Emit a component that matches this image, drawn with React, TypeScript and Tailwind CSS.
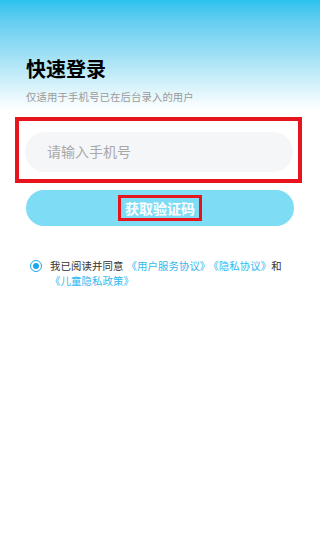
export default function App() {
  return (
    <div
      className="relative h-[553px] w-[320px] overflow-hidden bg-white"
      style={{ fontFamily: '"Noto Sans CJK SC", "Noto Sans", sans-serif' }}
    >
      {/* 顶部渐变 */}
      <div className="bg-gradient-to-b from-[#27c2ee] via-[#9fe0f5] to-white px-[26px] pb-[6px] pt-[57px]">
        <h1 className="text-[20px] font-bold leading-[24px] text-black">快速登录</h1>
        <p className="mt-[9px] text-[10.4px] leading-[14px] tracking-[0.1px] text-[#9a9a9a]">
          仅适用于手机号已在后台录入的用户
        </p>
      </div>

      <div className="ml-[15px] mt-[7px] h-[66px] w-[287px] border-4 border-[#e8141d] pl-[6px] pr-[5px] pt-[11px]">
        <input
          className="h-[40px] w-full rounded-full bg-[#f5f6f8] px-[22px] pb-[3px] text-[14px] outline-none placeholder:text-[#a8a8a8]"
          placeholder="请输入手机号"
        />
      </div>

      <button className="ml-[26px] mt-[7px] flex h-[36px] w-[268px] items-center justify-center rounded-full bg-[#7fdcf5]">
        <span className="flex h-[26px] w-[84px] items-center justify-center border-[3px] border-[#e8141d] text-[14px] font-bold text-white">
          获取验证码
        </span>
      </button>

      <div className="ml-[30px] mr-[26px] mt-[32px] flex items-start gap-[8px]">
        <span className="mt-[1.5px] flex h-[12px] w-[12px] shrink-0 items-center justify-center rounded-full border-[1.5px] border-[#1ba7e9]">
          <span className="h-[6px] w-[6px] rounded-full bg-[#1ba7e9]" />
        </span>
        <p className="text-[10.4px] leading-[15px] tracking-[0.1px] text-[#333]">
          我已阅读并同意
          <span className="ml-[3px] text-[#33b9ef]">《用户服务协议》</span>
          <span className="ml-[3px] text-[#33b9ef]">《隐私协议》</span>和
          <span className="text-[#33b9ef]">《儿童隐私政策》</span>
        </p>
      </div>
    </div>
  )
}
